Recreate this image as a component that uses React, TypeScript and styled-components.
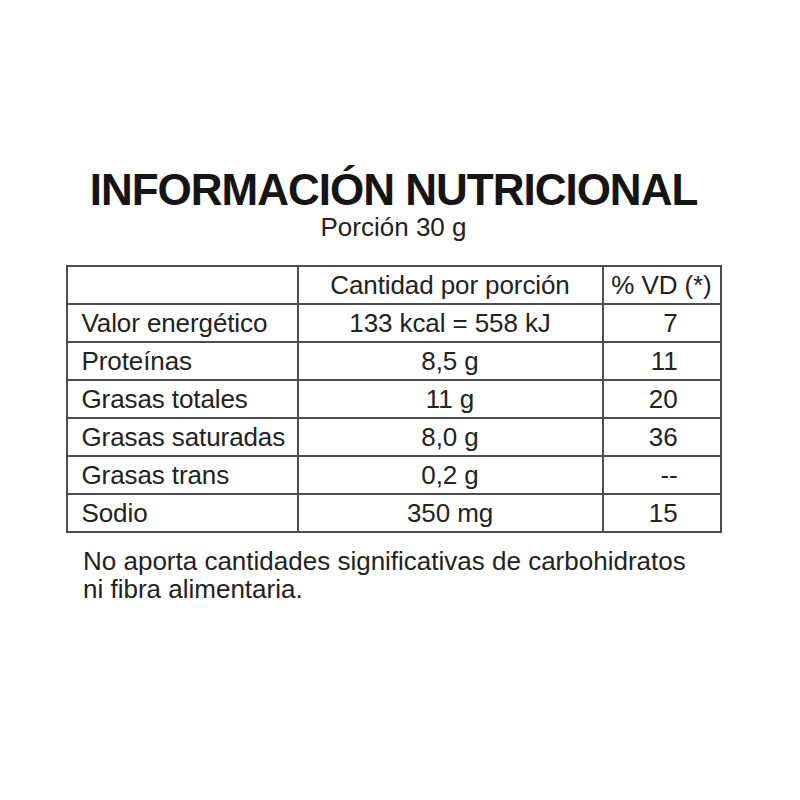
import styled, { createGlobalStyle } from 'styled-components';

const GlobalStyle = createGlobalStyle`
  html, body {
    margin: 0;
    padding: 0;
    background: #ffffff;
  }
  body {
    font-family: 'Liberation Sans', Arial, sans-serif;
    color: #1a1a1a;
  }
`;

const rows = [
  { name: 'Valor energético', amount: '133 kcal = 558 kJ', vd: '7' },
  { name: 'Proteínas', amount: '8,5 g', vd: '11' },
  { name: 'Grasas totales', amount: '11 g', vd: '20' },
  { name: 'Grasas saturadas', amount: '8,0 g', vd: '36' },
  { name: 'Grasas trans', amount: '0,2 g', vd: '--' },
  { name: 'Sodio', amount: '350 mg', vd: '15' },
];

const Page = styled.div`
  width: 800px;
  height: 800px;
  display: flex;
  flex-direction: column;
  align-items: center;
  padding: 166px 13px 0 0;
  box-sizing: border-box;
`;

const Title = styled.h1`
  margin: 0;
  font-family: 'Liberation Sans', Arial, sans-serif;
  font-weight: 700;
  font-size: 44px;
  line-height: 48px;
  letter-spacing: -1px;
  color: #151515;
`;

const Portion = styled.div`
  font-size: 26px;
  line-height: 26px;
  color: #222;
`;

const Table = styled.table`
  margin-top: 25px;
  width: 654px;
  table-layout: fixed;
  border-collapse: collapse;
  border: 2px solid #4d4d4d;
  font-size: 26px;
  letter-spacing: -0.1px;
  color: #222;
`;

const Cell = styled.td<{ $align?: 'left' | 'center' | 'right' }>`
  border: 2px solid #4d4d4d;
  height: 36px;
  padding: 0 ${(p) => (p.$align === 'right' ? '42px' : '14px')};
  text-align: ${(p) => p.$align ?? 'center'};
  white-space: nowrap;
  line-height: 30px;
`;

const HeadCell = styled(Cell)`
  padding: 0 6px;
`;

const Note = styled.p`
  align-self: flex-start;
  margin: 14px 0 0 83px;
  font-size: 26px;
  line-height: 28px;
  color: #222;
`;

export default function App() {
  return (
    <>
      <GlobalStyle />
      <Page>
        <Title>INFORMACIÓN NUTRICIONAL</Title>
        <Portion>Porción 30 g</Portion>
        <Table>
          <colgroup>
            <col style={{ width: 231 }} />
            <col style={{ width: 305 }} />
            <col style={{ width: 118 }} />
          </colgroup>
          <tbody>
            <tr>
              <HeadCell />
              <HeadCell>Cantidad por porción</HeadCell>
              <HeadCell>% VD (*)</HeadCell>
            </tr>
            {rows.map((r) => (
              <tr key={r.name}>
                <Cell $align="left">{r.name}</Cell>
                <Cell>{r.amount}</Cell>
                <Cell $align="right">{r.vd}</Cell>
              </tr>
            ))}
          </tbody>
        </Table>
        <Note>
          No aporta cantidades significativas de carbohidratos
          <br />
          ni fibra alimentaria.
        </Note>
      </Page>
    </>
  );
}
